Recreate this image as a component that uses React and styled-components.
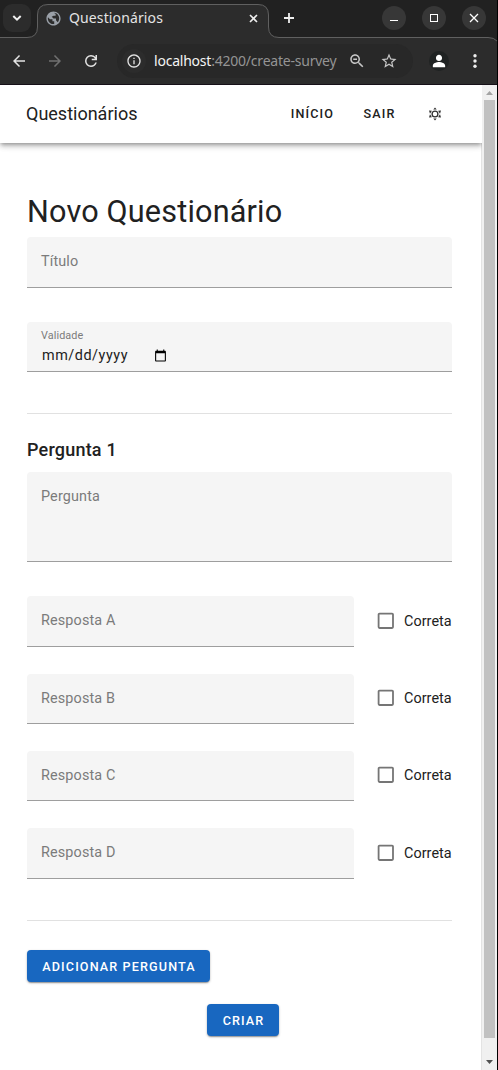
import React from "react";
import styled, { createGlobalStyle } from "styled-components";

const GlobalStyle = createGlobalStyle`
  * { box-sizing: border-box; }
  body { margin: 0; background: #fff; font-family: Roboto, sans-serif; color: #212121; }
  h1, h2 { margin: 0; }
`;

const Window = styled.div`
  width: 498px;
  height: 1070px;
  display: flex;
  flex-direction: column;
  overflow: hidden;
  background: #fff;
  border-right: 1px solid #000;
`;

const Chrome = styled.div`
  position: relative;
  height: 85px;
  flex: none;
  background: #212121;
  border-bottom: 1px solid #161018;
  color: #e4e4e4;
  font-family: "Noto Sans", sans-serif;
`;

const TabOutline = styled.svg`
  position: absolute;
  inset: 0;
`;

const TabStrip = styled.div`
  position: relative;
  height: 38px;
  display: flex;
  align-items: center;
  padding: 0 11px 2px 3px;
`;

const TabSearch = styled.div`
  width: 28px;
  height: 28px;
  border-radius: 9px;
  background: #2c2c2c;
  display: flex;
  align-items: center;
  justify-content: center;
`;

const Tab = styled.div`
  width: 213px;
  margin-left: 14px;
  display: flex;
  align-items: center;
`;

const TabTitle = styled.span`
  flex: 1;
  margin-left: 7px;
  font-size: 14px;
  line-height: 18px;
  letter-spacing: 0.12px;
`;

const NewTab = styled.div`
  display: flex;
  margin-left: 25px;
`;

const WindowControls = styled.div`
  margin-left: auto;
  display: flex;
  gap: 16px;
`;

const WindowButton = styled.div`
  width: 24px;
  height: 24px;
  border-radius: 50%;
  background: #373737;
  display: flex;
  align-items: center;
  justify-content: center;
`;

const Toolbar = styled.div`
  position: relative;
  height: 46px;
  display: flex;
  align-items: center;
  padding-left: 10px;
`;

const NavIcons = styled.div`
  display: flex;
  gap: 18px;
  width: 107px;
`;

const AddressBar = styled.div`
  width: 296px;
  height: 34px;
  border-radius: 17px;
  background: #282828;
  display: flex;
  align-items: center;
  padding: 0 15px 0 5px;
`;

const SiteInfo = styled.div`
  width: 24px;
  height: 24px;
  border-radius: 50%;
  background: #2c2c2c;
  display: flex;
  align-items: center;
  justify-content: center;
`;

const Url = styled.div`
  flex: 1;
  margin-left: 8px;
  font-size: 14px;
  line-height: 20px;
  letter-spacing: -0.22px;
  white-space: nowrap;
  color: #949494;
  span { color: #f4f4f4; }
`;

const AddressIcons = styled.div`
  display: flex;
  gap: 14px;
`;

const Avatar = styled.div`
  width: 20px;
  height: 20px;
  margin-left: 16px;
  border-radius: 50%;
  background: #1f2222;
  display: flex;
`;

const MenuDots = styled.div`
  display: flex;
  margin-left: 18px;
`;

const Viewport = styled.div`
  flex: 1;
  display: flex;
  min-height: 0;
`;

const Page = styled.div`
  width: 482px;
  flex: none;
  display: flex;
  flex-direction: column;
  overflow: hidden;
`;

const AppBar = styled.header`
  position: relative;
  flex: none;
  height: 58px;
  display: flex;
  align-items: center;
  padding: 0 40px 0 26px;
  background: #fff;
  box-shadow: 0 2px 4px -1px rgba(0, 0, 0, 0.33), 0 4px 5px 0 rgba(0, 0, 0, 0.14), 0 1px 10px 0 rgba(0, 0, 0, 0.08);
`;

const Brand = styled.div`
  flex: 1;
  font-size: 18px;
  line-height: 24px;
`;

const NavLink = styled.a`
  margin-right: ${(p) => p.$gap}px;
  font-size: 12.6px;
  font-weight: 500;
  line-height: 16px;
  letter-spacing: 1.125px;
  text-transform: uppercase;
`;

const Form = styled.main`
  flex: 1;
  padding: 50px 29px 0 27px;
  border-right: 1px solid #e3e3e3;
  display: flex;
  flex-direction: column;
`;

const Title = styled.h1`
  height: 44px;
  font-size: 30.6px;
  font-weight: 400;
  line-height: 38px;
  letter-spacing: 0.18px;
`;

const Subtitle = styled.h2`
  height: 35px;
  margin-top: 23px;
  font-size: 18px;
  font-weight: 500;
  line-height: 26px;
  letter-spacing: 0.2px;
`;

const Field = styled.div`
  height: ${(p) => p.$height}px;
  margin-top: ${(p) => p.$top || 0}px;
  padding: ${(p) => (p.$filled ? "8px" : "15px")} 14px 0;
  flex: ${(p) => (p.$grow ? 1 : "none")};
  border-bottom: 1px solid #9e9e9e;
  border-radius: 4px 4px 0 0;
  background: #f5f5f5;
`;

const Placeholder = styled.div`
  font-size: 14.4px;
  line-height: 20px;
  letter-spacing: 0.135px;
  color: #7b7b7b;
`;

const FloatingLabel = styled.div`
  font-size: 10.8px;
  line-height: 12px;
  letter-spacing: 0.1px;
  color: #7b7b7b;
`;

const DateValue = styled.div`
  display: flex;
  align-items: center;
  justify-content: space-between;
  width: 125.5px;
  height: 20px;
  margin-top: 3px;
  padding-left: 1px;
  font-size: 14.4px;
  letter-spacing: 0.54px;
`;

const Divider = styled.div`
  height: 1px;
  margin-top: 41px;
  background: #e1e1e1;
`;

const AnswerRow = styled.div`
  display: flex;
  align-items: flex-start;
  margin-top: ${(p) => p.$top}px;
`;

const Check = styled.div`
  width: 98px;
  height: ${(p) => p.$height}px;
  display: flex;
  align-items: center;
  padding-left: 21.3px;
  font-size: 14.4px;
  line-height: 17px;
  letter-spacing: 0.03px;
  white-space: nowrap;
  svg { margin-right: 7.2px; flex: none; }
`;

const Button = styled.button`
  width: ${(p) => p.$width}px;
  height: 32px;
  margin: ${(p) => p.$top}px 0 0 ${(p) => p.$left || 0}px;
  padding: 1px 0 0 1px;
  border: 0;
  border-radius: 4px;
  background: #1867c0;
  color: #fff;
  font: 500 12.6px/32px Roboto, sans-serif;
  letter-spacing: 1.125px;
  text-transform: uppercase;
  white-space: nowrap;
  box-shadow: 0 2px 1px -1px rgba(0, 0, 0, 0.2), 0 1px 2px 0 rgba(0, 0, 0, 0.2), 0 1px 3px 0 rgba(0, 0, 0, 0.12);
`;

const Scrollbar = styled.div`
  width: 15px;
  display: flex;
  flex-direction: column;
  align-items: center;
  background: #f0f0f0;
  svg { display: block; flex: none; }
`;

const Thumb = styled.div`
  width: 11px;
  height: 938px;
  background: #c1c1c1;
`;

const Icon = ({ d, size = 18, color = "#e3e3e3", box = "0 0 24 24" }) => (
  <svg width={size} height={size} viewBox={box} fill={color} display="block">
    <path d={d} />
  </svg>
);

const icons = {
  globe: "M12 2C6.48 2 2 6.48 2 12s4.48 10 10 10 10-4.48 10-10S17.52 2 12 2zm-1 17.93c-3.95-.49-7-3.85-7-7.93 0-.62.08-1.21.21-1.79L7 13h3.500v3H13v3.900zM17.900 17.390L15.500 14.500V12H12l-2.500-2.500L12 8h3V5.500l-2.500-1.500c4.500 0 7.500 4 7.500 8 0 2.080-.8 3.970-2.100 5.390z",
  back: "M20 11H7.83l5.59-5.59L12 4l-8 8 8 8 1.41-1.41L7.83 13H20v-2z",
  forward: "M12 4l-1.41 1.41L16.17 11H4v2h12.17l-5.58 5.59L12 20l8-8z",
  reload: "M12 20q-3.35 0-5.675-2.325T4 12q0-3.35 2.325-5.675T12 4q1.725 0 3.3.713T18 6.75V4h2v7h-7V9h4.2q-.8-1.4-2.188-2.2T12 6Q9.5 6 7.75 7.75T6 12q0 2.5 1.75 4.25T12 18q1.925 0 3.475-1.1T17.65 14h2.1q-.7 2.65-2.85 4.325T12 20z",
  info: "M11 7h2v2h-2zm0 4h2v6h-2zm1-9C6.48 2 2 6.48 2 12s4.48 10 10 10 10-4.48 10-10S17.52 2 12 2zm0 18c-4.41 0-8-3.59-8-8s3.59-8 8-8 8 3.59 8 8-3.59 8-8 8z",
  zoomOut: "M15.5 14h-.79l-.28-.27C15.41 12.59 16 11.11 16 9.5 16 5.91 13.09 3 9.5 3S3 5.91 3 9.5 5.91 16 9.5 16c1.61 0 3.09-.59 4.23-1.57l.27.28v.79l5 4.99L20.49 19l-4.99-5zm-6 0C7.01 14 5 11.99 5 9.5S7.01 5 9.5 5 14 7.01 14 9.5 11.99 14 9.5 14zM7 8.5h5v2H7z",
  star: "M22 9.24l-7.19-.62L12 2 9.19 8.63 2 9.24l5.46 4.73L5.82 21 12 17.27 18.18 21l-1.63-7.03L22 9.24zM12 15.4l-3.76 2.27 1-4.28-3.32-2.88 4.38-.38L12 6.1l1.71 4.04 4.38.38-3.32 2.88 1 4.28L12 15.4z",
  person: "M12 12c2.21 0 4-1.79 4-4s-1.79-4-4-4-4 1.79-4 4 1.79 4 4 4zm0 1.4c-3 0-8 1.5-8 4.6v2h16v-2c0-3.1-5-4.6-8-4.6z",
  checkbox: "M19,3H5C3.89,3 3,3.89 3,5V19A2,2 0 0,0 5,21H19A2,2 0 0,0 21,19V5C21,3.89 20.1,3 19,3M19,5V19H5V5H19Z",
  calendar: "M20 3h-1V1h-2v2H7V1H5v2H4c-1.1 0-2 .9-2 2v16c0 1.1.9 2 2 2h16c1.1 0 2-.9 2-2V5c0-1.1-.9-2-2-2zm0 18H4V8h16v13z",
};

const Sun = () => (
  <svg width="14" height="14" viewBox="0 0 14 14" fill="#303030">
    <circle cx="7" cy="7" r="2.9" fill="none" stroke="#303030" strokeWidth="1.3" />
    <path d="M7 .4 8.700 2.500H5.300ZM7 13.600 5.300 11.500h3.400ZM1 3.500l2.900.3L2 6.700ZM1 10.500 2 7.300 3.900 10.200ZM13 3.500 12 6.700 10.100 3.800ZM13 10.500 10.100 10.200 12 7.300Z" />
  </svg>
);

const answers = [
  { name: "Resposta A", top: 34, height: 51, checkHeight: 50 },
  { name: "Resposta B", top: 27, height: 50, checkHeight: 48 },
  { name: "Resposta C", top: 27, height: 50, checkHeight: 48 },
  { name: "Resposta D", top: 27, height: 51, checkHeight: 50 },
];

function BrowserChrome() {
  return (
    <Chrome>
      <TabOutline width="497" height="84" viewBox="0 0 497 84">
        <path d="M0 37.5H27Q37.5 37.5 37.5 27V15Q37.5 4.5 48 4.5H258Q268.5 4.5 268.5 15V27Q268.5 37.5 279 37.5H488Q494 37.5 497 41V84H0Z" fill="#2c2c2c" />
        <path d="M0 37.5H27Q37.5 37.5 37.5 27V15Q37.5 4.5 48 4.5H258Q268.5 4.5 268.5 15V27Q268.5 37.5 279 37.5H488Q494 37.5 497 41" fill="none" stroke="#606060" />
      </TabOutline>
      <TabStrip>
        <TabSearch>
          <svg width="10" height="8" viewBox="0 0 10 8" fill="none" stroke="#f0f0f0" strokeWidth="2"><path d="m1.3 2 3.7 3.6L8.7 2" /></svg>
        </TabSearch>
        <Tab>
          <Icon d={icons.globe} size={17} color="#9aa0a8" />
          <TabTitle>Questionários</TabTitle>
          <svg width="9" height="9" viewBox="0 0 9 9" stroke="#eee" strokeWidth="1.6"><path d="m1 1 7 7M8 1 1 8" /></svg>
        </Tab>
        <NewTab>
          <svg width="12" height="12" viewBox="0 0 12 12" stroke="#eee" strokeWidth="1.8"><path d="M6 1v10M1 6h10" /></svg>
        </NewTab>
        <WindowControls>
          <WindowButton><svg width="10" height="10" viewBox="0 0 10 10" stroke="#fff"><path d="M1 7.5h8" /></svg></WindowButton>
          <WindowButton><svg width="8" height="8" viewBox="0 0 8 8" fill="none" stroke="#fff"><rect x=".5" y=".5" width="7" height="7" /></svg></WindowButton>
          <WindowButton><svg width="10" height="10" viewBox="0 0 10 10" stroke="#fff" strokeWidth="1.3"><path d="m1 1 8 8M9 1 1 9" /></svg></WindowButton>
        </WindowControls>
      </TabStrip>
      <Toolbar>
        <NavIcons>
          <Icon d={icons.back} />
          <Icon d={icons.forward} color="#707070" />
          <Icon d={icons.reload} />
        </NavIcons>
        <AddressBar>
          <SiteInfo><Icon d={icons.info} size={16} /></SiteInfo>
          <Url><span>localhost</span>:4200/create-survey</Url>
          <AddressIcons>
            <Icon d={icons.zoomOut} color="#c7c7c7" />
            <Icon d={icons.star} color="#c7c7c7" />
          </AddressIcons>
        </AddressBar>
        <Avatar><Icon d={icons.person} size={20} color="#fff" box="-1 -1 26 26" /></Avatar>
        <MenuDots>
          <svg width="16" height="16" viewBox="0 0 16 16" fill="#eee"><circle cx="8" cy="2.8" r="1.7" /><circle cx="8" cy="8" r="1.7" /><circle cx="8" cy="13.2" r="1.7" /></svg>
        </MenuDots>
      </Toolbar>
    </Chrome>
  );
}

export default function App() {
  return (
    <Window>
      <GlobalStyle />
      <BrowserChrome />
      <Viewport>
        <Page>
          <AppBar>
            <Brand>Questionários</Brand>
            <NavLink $gap={29.5}>Início</NavLink>
            <NavLink $gap={32.5}>Sair</NavLink>
            <Sun />
          </AppBar>
          <Form>
            <Title>Novo Questionário</Title>
            <Field $height={51}><Placeholder>Título</Placeholder></Field>
            <Field $height={50} $top={34} $filled>
              <FloatingLabel>Validade</FloatingLabel>
              <DateValue>mm/dd/yyyy<Icon d={icons.calendar} size={13} color="#000" /></DateValue>
            </Field>
            <Divider />
            <Subtitle>Pergunta 1</Subtitle>
            <Field $height={90}><Placeholder>Pergunta</Placeholder></Field>
            {answers.map((a) => (
              <AnswerRow key={a.name} $top={a.top}>
                <Field $height={a.height} $grow><Placeholder>{a.name}</Placeholder></Field>
                <Check $height={a.checkHeight}><Icon d={icons.checkbox} size={21.6} color="#757575" />Correta</Check>
              </AnswerRow>
            ))}
            <Divider />
            <Button $width={183} $top={29}>Adicionar Pergunta</Button>
            <Button $width={72} $top={22} $left={180}>Criar</Button>
          </Form>
        </Page>
        <Scrollbar>
          <svg width="15" height="15" viewBox="0 0 15 15"><path d="m4 10 3.500-4 3.500 4Z" fill="#a3a3a3" /></svg>
          <Thumb />
          <svg width="15" height="32" viewBox="0 0 15 32"><path d="M4 22h7l-3.500 4Z" fill="#505050" /></svg>
        </Scrollbar>
      </Viewport>
    </Window>
  );
}
